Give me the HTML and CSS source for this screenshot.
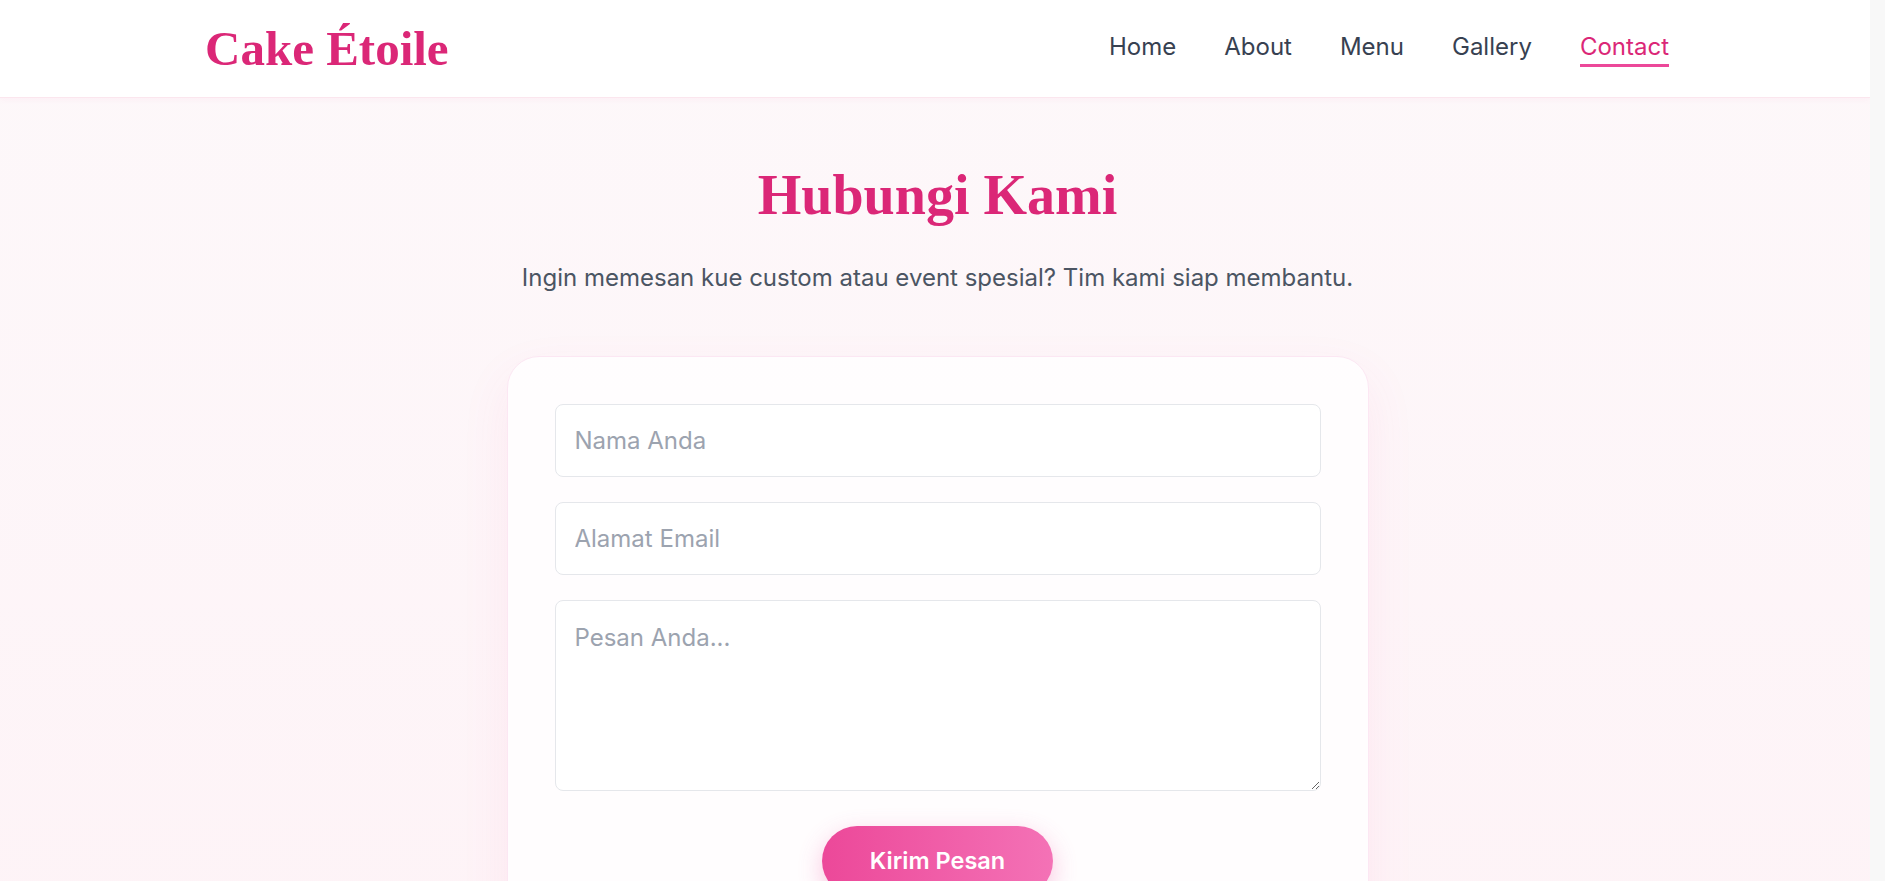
FILE: index.html
```html
<!DOCTYPE html>
<html lang="id">
<head>
<meta charset="utf-8">
<title>Cake Étoile - Contact</title>
<link rel="stylesheet" href="styles.css">
</head>
<body>
<header class="site-header">
  <div class="header-inner">
    <a class="logo" href="#">Cake Étoile</a>
    <nav class="nav-links">
      <a href="#">Home</a>
      <a href="#">About</a>
      <a href="#">Menu</a>
      <a href="#">Gallery</a>
      <a href="#" class="active">Contact</a>
    </nav>
  </div>
</header>
<main class="contact">
  <h1 class="contact-title">Hubungi Kami</h1>
  <p class="contact-sub">Ingin memesan kue custom atau event spesial? Tim kami siap membantu.</p>
  <form class="contact-card">
    <input class="field" type="text" placeholder="Nama Anda">
    <input class="field" type="email" placeholder="Alamat Email">
    <textarea class="field area" placeholder="Pesan Anda..."></textarea>
    <button class="send" type="button">Kirim Pesan</button>
  </form>
</main>
</body>
</html>
```
FILE: styles.css
```css
html {
  margin: 0;
  padding: 0;
  background: #f8f8f8;
}
body {
  margin: 0 15px 0 0;
  padding: 0;
  font-family: Inter, "Noto Sans", sans-serif;
  background: linear-gradient(180deg, #fdf8fa 0%, #fef2f6 100%);
  min-height: 1200px;
  color: #374151;
}
.site-header {
  height: 98px;
  box-sizing: border-box;
  background: #ffffff;
  border-bottom: 1px solid #fbe6ee;
  box-shadow: 0 2px 6px rgba(236, 72, 153, 0.05);
}
.header-inner {
  max-width: 1468px;
  height: 100%;
  margin: 0 auto;
  padding: 0 0 0 4px;
  box-sizing: border-box;
  display: flex;
  align-items: center;
  justify-content: space-between;
}
.logo {
  font-family: "Liberation Serif", serif;
  font-weight: 700;
  font-size: 49px;
  color: #db2777;
  text-decoration: none;
}
.nav-links {
  display: flex;
  gap: 48px;
  font-size: 24px;
  margin-bottom: 5px;
}
.nav-links a {
  color: #374151;
  text-decoration: none;
  position: relative;
}
.nav-links a.active {
  color: #db2777;
}
.nav-links a.active::after {
  content: "";
  position: absolute;
  left: 0;
  right: 0;
  bottom: -6px;
  height: 3px;
  background: #ec4899;
}
.contact {
  display: flex;
  flex-direction: column;
  align-items: center;
  padding: 64px 0 0 5px;
}
.contact-title {
  margin: 0;
  font-family: "Liberation Serif", serif;
  font-weight: 700;
  font-size: 56px;
  line-height: 1.2;
  color: #db2777;
}
.contact-sub {
  margin: 30px 0 0;
  font-size: 24px;
  line-height: 1.6;
  color: #4b5563;
}
.contact-card {
  margin-top: 58px;
  width: 862px;
  box-sizing: border-box;
  padding: 47px;
  border-radius: 32px;
  background: rgba(255, 255, 255, 0.8);
  border: 1px solid #fce7f3;
  box-shadow: 0 20px 50px rgba(236, 72, 153, 0.08);
  display: flex;
  flex-direction: column;
  gap: 25px;
}
.field {
  display: block;
  height: 73px;
  box-sizing: border-box;
  padding: 0 19px;
  border: 1px solid #e5e7eb;
  border-radius: 8px;
  background: #ffffff;
  font-family: Inter, "Noto Sans", sans-serif;
  font-size: 24px;
  color: #374151;
  outline: none;
}
.field::placeholder {
  color: #9ca3af;
}
.area {
  height: 191px;
  padding: 22px 19px;
  resize: vertical;
}
.send {
  align-self: center;
  margin-top: 10px;
  height: 70px;
  padding: 0 48px;
  border: none;
  border-radius: 999px;
  background: linear-gradient(90deg, #ec4899 0%, #f472b6 100%);
  color: #ffffff;
  font-family: Inter, "Noto Sans", sans-serif;
  font-size: 23.5px;
  font-weight: 600;
  box-shadow: 0 8px 24px rgba(236, 72, 153, 0.3);
  cursor: pointer;
}
```
